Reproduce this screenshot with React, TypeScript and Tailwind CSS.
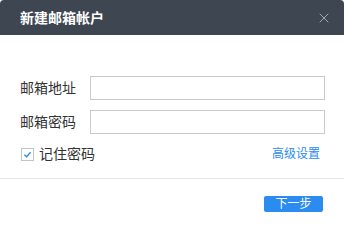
import { X } from "lucide-react";

const font = { fontFamily: '"Liberation Sans", "Noto Sans CJK SC", sans-serif' };

function Field({ label, type }: { label: string; type: string }) {
  return (
    <div className="flex h-[24px] items-center">
      <label className="w-[70px] shrink-0 text-[14px] leading-none text-[#333]">{label}</label>
      <input
        type={type}
        className="h-[24px] w-[235px] border border-[#c8cacf] bg-white px-2 text-[13px] outline-none"
      />
    </div>
  );
}

export default function App() {
  return (
    <div className="h-[213px] w-[344px] overflow-hidden bg-white" style={font}>
      <div className="flex h-[35px] items-center justify-between rounded-t-[4px] bg-[#3d4651] pl-[20px] pr-[12px]">
        <h1 className="text-[14px] font-bold leading-none text-white">新建邮箱帐户</h1>
        <X className="h-[16px] w-[16px] text-[#a3a9b0]" strokeWidth={1.5} />
      </div>

      <div className="flex flex-col gap-[10px] pl-[20px] pt-[41px]">
        <Field label="邮箱地址" type="email" />
        <Field label="邮箱密码" type="password" />
      </div>

      <div className="mt-[13px] flex h-[14px] items-center justify-between pl-[21px] pr-[24px]">
        <label className="flex items-center gap-[5px]">
          <span className="flex h-[13px] w-[13px] items-center justify-center border border-[#c0c4cc] bg-white">
            <svg viewBox="0 0 10 10" className="h-[9px] w-[9px]">
              <path d="M1.5 5.2 L4 7.5 L8.5 2.5" fill="none" stroke="#2a8cf0" strokeWidth="1.5" />
            </svg>
          </span>
          <span className="text-[14px] leading-none text-[#333]">记住密码</span>
        </label>
        <a className="text-[12px] leading-none text-[#2a8cf0]">高级设置</a>
      </div>

      <div className="mt-[17px] border-t border-[#e6e6e6]" />

      <div className="flex justify-end pr-[21px] pt-[17px]">
        <button className="h-[16px] w-[59px] rounded-[2px] bg-[#2a8cf0] text-[12px] leading-none text-white">
          下一步
        </button>
      </div>
    </div>
  );
}
